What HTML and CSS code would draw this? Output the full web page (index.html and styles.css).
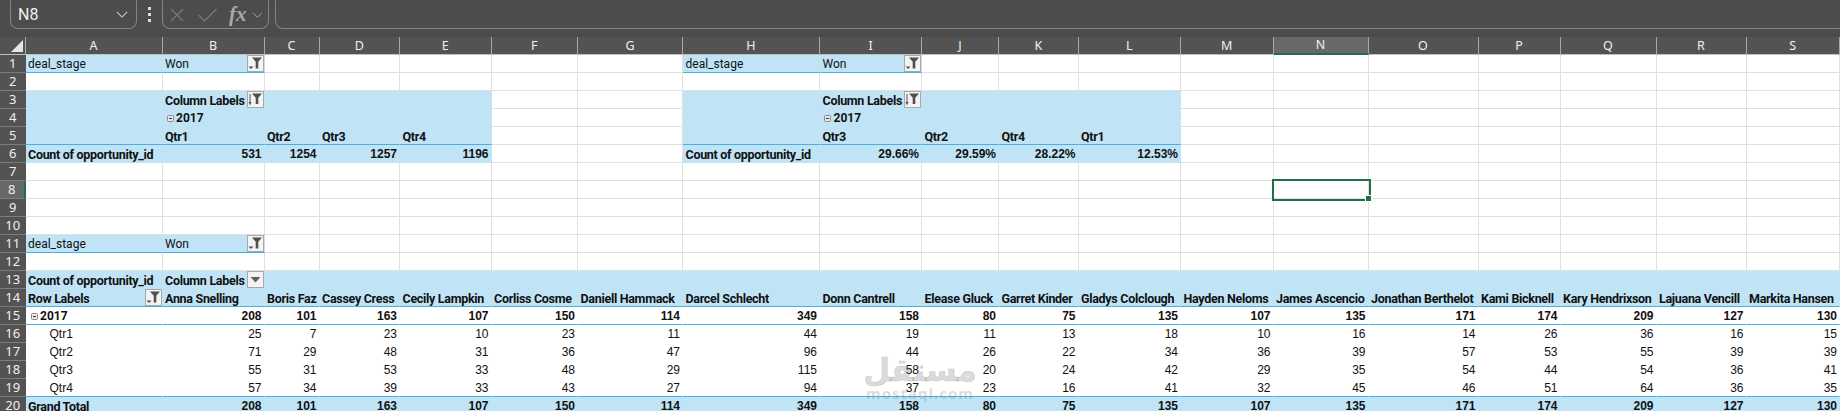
FILE: index.html
```html
<!DOCTYPE html>
<html lang="en">
<head>
<meta charset="utf-8">
<title>Sheet</title>
<link rel="stylesheet" href="styles.css">
</head>
<body>
<svg class="defs" width="0" height="0" aria-hidden="true">
  <symbol id="fsort" viewBox="0 0 15 15"><path d="M4 1.500h10l-3.700 4.200V12H7.700V5.700z" fill="#505050"/><path d="M2 2v9" stroke="#505050" fill="none"/><path d="M.5 10 2 13.500 3.500 10z" fill="#505050"/></symbol>
  <symbol id="ffil" viewBox="0 0 15 15"><path d="M4 1.500h10l-3.700 4.200V12.500H7.700V5.700z" fill="#505050"/><path d="M.5 10.500h5L3 13z" fill="#505050"/></symbol>
  <symbol id="fdrop" viewBox="0 0 15 15"><path d="M2.500 5h10l-5 5.500z" fill="#606060"/></symbol>
  <symbol id="minus" viewBox="0 0 7 7"><rect x=".5" y=".5" width="6" height="6" rx="1" fill="#e8e8e8" stroke="#8a8a8a"/><path d="M2 3.500h3" stroke="#333"/></symbol>
</svg>
<div class="formula">
  <div class="namebox"><span>N8</span>
    <svg class="chev" viewBox="0 0 14 8"><path d="M1 1l6 6 6-6" fill="none" stroke="#d0d0d0" stroke-width="1.200"/></svg>
  </div>
  <div class="dots"><i></i><i></i><i></i></div>
  <div class="fxbox">
    <svg class="tool" viewBox="0 0 14 14"><path d="M1 1l12 12M13 1L1 13" fill="none" stroke="#7a7a7a" stroke-width="1.100"/></svg>
    <svg class="tool tick" viewBox="0 0 20 14"><path d="M1 7l6 6L19 1" fill="none" stroke="#7a7a7a" stroke-width="1.100"/></svg>
    <span class="fx">fx</span>
    <svg class="chev small" viewBox="0 0 14 8"><path d="M1 1l6 6 6-6" fill="none" stroke="#b0b0b0" stroke-width="1.200"/></svg>
  </div>
  <div class="input"></div>
</div>
<div class="sheetwrap">
<table class="sheet">
<colgroup><col class="cr"><col class="ca"><col class="cb"><col class="cc"><col class="cd"><col class="ce"><col class="cf"><col class="cg"><col class="ch"><col class="ci"><col class="cj"><col class="ck"><col class="cl"><col class="cm"><col class="cn"><col class="co"><col class="cp"><col class="cq"><col class="cr2"><col class="cs"></colgroup>
<tr class="hd"><th class="corner"><svg viewBox="0 0 12 12"><path d="M12 0v12H0z" fill="#e6e6e6"/></svg></th><th>A</th><th>B</th><th>C</th><th>D</th><th>E</th><th>F</th><th>G</th><th>H</th><th>I</th><th>J</th><th>K</th><th>L</th><th>M</th><th class="sel">N</th><th>O</th><th>P</th><th>Q</th><th>R</th><th>S</th></tr>
<tr><th>1</th><td class="b u">deal_stage</td><td class="b u f">Won<svg class="btn"><use href="#ffil"/></svg></td><td></td><td></td><td></td><td></td><td></td><td class="b u">deal_stage</td><td class="b u f">Won<svg class="btn"><use href="#ffil"/></svg></td><td></td><td></td><td></td><td></td><td></td><td></td><td></td><td></td><td></td><td></td></tr>
<tr><th>2</th><td></td><td></td><td></td><td></td><td></td><td></td><td></td><td></td><td></td><td></td><td></td><td></td><td></td><td></td><td></td><td></td><td></td><td></td><td></td></tr>
<tr><th>3</th><td class="b"></td><td class="b h f">Column Labels<svg class="btn"><use href="#fsort"/></svg></td><td class="b"></td><td class="b"></td><td class="b"></td><td></td><td></td><td class="b"></td><td class="b h f">Column Labels<svg class="btn"><use href="#fsort"/></svg></td><td class="b"></td><td class="b"></td><td class="b"></td><td></td><td></td><td></td><td></td><td></td><td></td><td></td></tr>
<tr><th>4</th><td class="b"></td><td class="b h yr"><svg class="mn"><use href="#minus"/></svg>2017</td><td class="b"></td><td class="b"></td><td class="b"></td><td></td><td></td><td class="b"></td><td class="b h yr"><svg class="mn"><use href="#minus"/></svg>2017</td><td class="b"></td><td class="b"></td><td class="b"></td><td></td><td></td><td></td><td></td><td></td><td></td><td></td></tr>
<tr><th>5</th><td class="b u"></td><td class="b u h">Qtr1</td><td class="b u h">Qtr2</td><td class="b u h">Qtr3</td><td class="b u h">Qtr4</td><td></td><td></td><td class="b u"></td><td class="b u h">Qtr3</td><td class="b u h">Qtr2</td><td class="b u h">Qtr4</td><td class="b u h">Qtr1</td><td></td><td></td><td></td><td></td><td></td><td></td><td></td></tr>
<tr><th>6</th><td class="b h">Count of opportunity_id</td><td class="b n s">531</td><td class="b n s">1254</td><td class="b n s">1257</td><td class="b n s">1196</td><td></td><td></td><td class="b h">Count of opportunity_id</td><td class="b n s">29.66%</td><td class="b n s">29.59%</td><td class="b n s">28.22%</td><td class="b n s">12.53%</td><td></td><td></td><td></td><td></td><td></td><td></td><td></td></tr>
<tr><th>7</th><td></td><td></td><td></td><td></td><td></td><td></td><td></td><td></td><td></td><td></td><td></td><td></td><td></td><td></td><td></td><td></td><td></td><td></td><td></td></tr>
<tr><th class="selr">8</th><td></td><td></td><td></td><td></td><td></td><td></td><td></td><td></td><td></td><td></td><td></td><td></td><td></td><td class="active"></td><td></td><td></td><td></td><td></td><td></td></tr>
<tr><th>9</th><td></td><td></td><td></td><td></td><td></td><td></td><td></td><td></td><td></td><td></td><td></td><td></td><td></td><td></td><td></td><td></td><td></td><td></td><td></td></tr>
<tr><th>10</th><td></td><td></td><td></td><td></td><td></td><td></td><td></td><td></td><td></td><td></td><td></td><td></td><td></td><td></td><td></td><td></td><td></td><td></td><td></td></tr>
<tr><th>11</th><td class="b u">deal_stage</td><td class="b u f">Won<svg class="btn"><use href="#ffil"/></svg></td><td></td><td></td><td></td><td></td><td></td><td></td><td></td><td></td><td></td><td></td><td></td><td></td><td></td><td></td><td></td><td></td><td></td></tr>
<tr><th>12</th><td></td><td></td><td></td><td></td><td></td><td></td><td></td><td></td><td></td><td></td><td></td><td></td><td></td><td></td><td></td><td></td><td></td><td></td><td></td></tr>
<tr><th>13</th><td class="b h">Count of opportunity_id</td><td class="b h f">Column Labels<svg class="btn"><use href="#fdrop"/></svg></td><td class="b"></td><td class="b"></td><td class="b"></td><td class="b"></td><td class="b"></td><td class="b"></td><td class="b"></td><td class="b"></td><td class="b"></td><td class="b"></td><td class="b"></td><td class="b"></td><td class="b"></td><td class="b"></td><td class="b"></td><td class="b"></td><td class="b"></td></tr>
<tr><th>14</th><td class="b u h f">Row Labels<svg class="btn"><use href="#ffil"/></svg></td><td class="b u h">Anna Snelling</td><td class="b u h">Boris Faz</td><td class="b u h">Cassey Cress</td><td class="b u h">Cecily Lampkin</td><td class="b u h">Corliss Cosme</td><td class="b u h">Daniell Hammack</td><td class="b u h">Darcel Schlecht</td><td class="b u h">Donn Cantrell</td><td class="b u h">Elease Gluck</td><td class="b u h">Garret Kinder</td><td class="b u h">Gladys Colclough</td><td class="b u h">Hayden Neloms</td><td class="b u h">James Ascencio</td><td class="b u h">Jonathan Berthelot</td><td class="b u h">Kami Bicknell</td><td class="b u h">Kary Hendrixson</td><td class="b u h">Lajuana Vencill</td><td class="b u h">Markita Hansen</td></tr>
<tr class="sub"><th>15</th><td class="u h yr tight"><svg class="mn"><use href="#minus"/></svg>2017</td><td class="u n s">208</td><td class="u n s">101</td><td class="u n s">163</td><td class="u n s">107</td><td class="u n s">150</td><td class="u n s">114</td><td class="u n s">349</td><td class="u n s">158</td><td class="u n s">80</td><td class="u n s">75</td><td class="u n s">135</td><td class="u n s">107</td><td class="u n s">135</td><td class="u n s">171</td><td class="u n s">174</td><td class="u n s">209</td><td class="u n s">127</td><td class="u n s">130</td></tr>
<tr class="data"><th>16</th><td class="q">Qtr1</td><td class="n">25</td><td class="n">7</td><td class="n">23</td><td class="n">10</td><td class="n">23</td><td class="n">11</td><td class="n">44</td><td class="n">19</td><td class="n">11</td><td class="n">13</td><td class="n">18</td><td class="n">10</td><td class="n">16</td><td class="n">14</td><td class="n">26</td><td class="n">36</td><td class="n">16</td><td class="n">15</td></tr>
<tr class="data"><th>17</th><td class="q">Qtr2</td><td class="n">71</td><td class="n">29</td><td class="n">48</td><td class="n">31</td><td class="n">36</td><td class="n">47</td><td class="n">96</td><td class="n">44</td><td class="n">26</td><td class="n">22</td><td class="n">34</td><td class="n">36</td><td class="n">39</td><td class="n">57</td><td class="n">53</td><td class="n">55</td><td class="n">39</td><td class="n">39</td></tr>
<tr class="data"><th>18</th><td class="q">Qtr3</td><td class="n">55</td><td class="n">31</td><td class="n">53</td><td class="n">33</td><td class="n">48</td><td class="n">29</td><td class="n">115</td><td class="n">58</td><td class="n">20</td><td class="n">24</td><td class="n">42</td><td class="n">29</td><td class="n">35</td><td class="n">54</td><td class="n">44</td><td class="n">54</td><td class="n">36</td><td class="n">41</td></tr>
<tr class="data last"><th>19</th><td class="q u">Qtr4</td><td class="n u">57</td><td class="n u">34</td><td class="n u">39</td><td class="n u">33</td><td class="n u">43</td><td class="n u">27</td><td class="n u">94</td><td class="n u">37</td><td class="n u">23</td><td class="n u">16</td><td class="n u">41</td><td class="n u">32</td><td class="n u">45</td><td class="n u">46</td><td class="n u">51</td><td class="n u">64</td><td class="n u">36</td><td class="n u">35</td></tr>
<tr><th>20</th><td class="b h">Grand Total</td><td class="b n s">208</td><td class="b n s">101</td><td class="b n s">163</td><td class="b n s">107</td><td class="b n s">150</td><td class="b n s">114</td><td class="b n s">349</td><td class="b n s">158</td><td class="b n s">80</td><td class="b n s">75</td><td class="b n s">135</td><td class="b n s">107</td><td class="b n s">135</td><td class="b n s">171</td><td class="b n s">174</td><td class="b n s">209</td><td class="b n s">127</td><td class="b n s">130</td></tr>
</table>
<div class="mark"><div class="ar" dir="rtl" lang="ar">مستقل</div><div class="lat">mostaql.com</div></div>
</div>
</body>
</html>
```
FILE: styles.css
```css
* { box-sizing: border-box; }
html, body { margin: 0; padding: 0; height: 411px; width: 1840px; overflow: hidden; background: #fff; }
body { font-family: "Liberation Sans", Arial, sans-serif; }
.defs { position: absolute; }

.formula { height: 37px; background: #4c4c4c; display: flex; align-items: flex-start; padding-left: 10px; }
.namebox { width: 127px; height: 29px; border: 1px solid #858585; border-top-color: #4c4c4c; border-radius: 0 0 8px 8px; display: flex; align-items: center; justify-content: space-between; padding: 0 8px 0 7px; color: #f0f0f0; font: 400 16px "Roboto", sans-serif; }
.chev { width: 12px; height: 7px; }
.chev.small { width: 11px; height: 6px; }
.dots { width: 25px; height: 28px; display: flex; flex-direction: column; align-items: center; justify-content: center; gap: 3px; }
.dots i { width: 3px; height: 3px; background: #dcdcdc; display: block; }
.fxbox { width: 107px; height: 29px; border: 1px solid #858585; border-top-color: #4c4c4c; border-radius: 0 0 8px 8px; display: flex; align-items: center; padding-left: 7px; }
.tool { width: 14px; height: 14px; flex: none; }
.tool.tick { width: 21px; margin-left: 13px; }
.fx { font-family: "Liberation Serif", serif; font-style: italic; font-weight: bold; font-size: 21px; color: #a8a8a8; margin: 0 5px 0 11px; line-height: 1; }
.input { flex: 1; height: 29px; margin-left: 6px; border: 1px solid #858585; border-top-color: #4c4c4c; border-right: 0; border-radius: 0 0 0 8px; }

.sheetwrap { position: relative; height: 374px; overflow: hidden; }
.sheet { table-layout: fixed; border-collapse: separate; border-spacing: 0; width: 1840px; }
.cr { width: 25.500px; } .ca { width: 137px; } .cb { width: 102px; } .cc { width: 55px; } .cd { width: 80.500px; } .ce { width: 91.500px; } .cf { width: 86.500px; } .cg { width: 105px; } .ch { width: 137px; } .ci { width: 102px; } .cj { width: 77px; } .ck { width: 79.500px; } .cl { width: 102.500px; } .cm { width: 92.500px; } .cn { width: 95px; } .co { width: 110px; } .cp { width: 82px; } .cq { width: 96px; } .cr2 { width: 90px; } .cs { width: 93.500px; }

tr { height: 18px; }
th { background: #535353; color: #f0f0f0; font: 400 13px "Noto Sans", sans-serif; padding: 0; text-align: center; border-bottom: 1px solid #7c7c7c; overflow: hidden; height: 18px; line-height: 17px; }
.hd { height: 17.500px; }
.hd th { height: 17.500px; border-right: 1px solid #a8a8a8; border-bottom: 1px solid #c0c0c0; background: #535353; font-size: 12.500px; line-height: 16px; }
.hd .sel { background: #686868; border-bottom: 2px solid #1e7145; }
.corner { position: relative; }
.corner svg { position: absolute; right: 2px; bottom: 2px; width: 12px; height: 12px; }
.selr { background: #686868; border-right: 2px solid #1e7145; }

td { height: 18px; padding: 2px 2px 0 2.500px; border-right: 1px solid #e0e0e0; border-bottom: 1px solid #e0e0e0; font: 400 12px/15px "Liberation Sans", sans-serif; color: #111; white-space: nowrap; overflow: visible; position: relative; background: #fff; }
td.b { background: #c0e4f5; border-right-color: #c0e4f5; border-bottom-color: #c0e4f5; }
td.u { border-bottom: 1px solid #45b0e1; }
.h { font: 700 12.500px/15px "Roboto", sans-serif; letter-spacing: -.3px; }
.b:not(.h):not(.n) { font-family: "Roboto", sans-serif; letter-spacing: 0; }
.n { text-align: right; padding-right: 2px; }
.s { font-weight: 700; }
.q { padding-left: 24px; }
.sub td, .data td { border-right-color: #fff; border-bottom-color: #fff; }
.sub td.u, .data td.u { border-bottom-color: #45b0e1; }
.yr { font-size: 12px; letter-spacing: 0; padding-left: 4px; }
.yr.tight { padding-left: 5px; }
.mn { width: 7px; height: 7px; margin-right: 2.500px; vertical-align: 0; }
.btn { position: absolute; right: 0; top: 0; width: 17px; height: 17px; background: #f3f3f3; border: 1px solid #a8a8a8; }
.active { outline: 2px solid #1e7145; outline-offset: 0; z-index: 2; }
.active::after { content: ""; position: absolute; right: -4px; bottom: -4px; width: 5px; height: 5px; background: #1e7145; border: 1px solid #fff; }

.mark { position: absolute; left: 860px; top: 316px; width: 120px; text-align: center; color: rgba(130,130,130,.28); pointer-events: none; }
.ar { font: 700 31px/34px "DejaVu Sans", "Noto Sans", sans-serif; -webkit-text-stroke: 1px rgba(130,130,130,.2); }
.lat { font: 700 15px/12px "Noto Sans", sans-serif; letter-spacing: 1px; }
```
